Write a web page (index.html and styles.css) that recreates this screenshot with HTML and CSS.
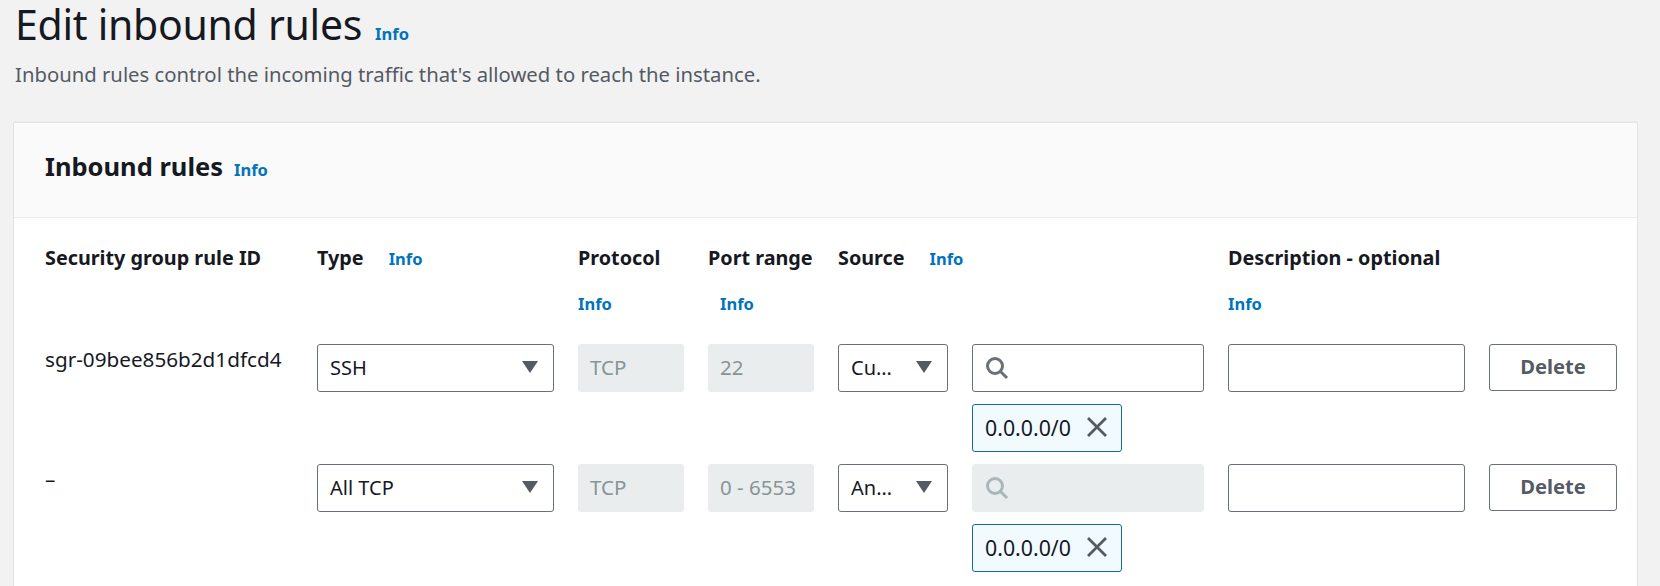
FILE: index.html
```html
<!DOCTYPE html>
<html lang="en">
<head>
<meta charset="utf-8">
<title>Edit inbound rules</title>
<link rel="stylesheet" href="styles.css">
</head>
<body>
<div class="page">
  <header class="page-head">
    <div class="title-row"><h1>Edit inbound rules</h1><a class="info info-title">Info</a></div>
    <p class="subtitle">Inbound rules control the incoming traffic that's allowed to reach the instance.</p>
  </header>
  <section class="card">
    <div class="card-head"><h2>Inbound rules</h2><a class="info info-card">Info</a></div>
    <div class="card-body">
      <div class="grid heads">
        <div class="col-head">Security group rule ID</div>
        <div class="col-head"><span>Type</span><a class="info">Info</a></div>
        <div class="col-head stack"><span>Protocol</span><a class="info">Info</a></div>
        <div class="col-head stack"><span>Port range</span><a class="info info-port">Info</a></div>
        <div class="col-head span2"><span>Source</span><a class="info">Info</a></div>
        <div class="col-head stack"><span>Description - optional</span><a class="info">Info</a></div>
        <div></div>
      </div>

      <div class="grid rule">
        <div class="rule-id">sgr-09bee856b2d1dfcd4</div>
        <div class="select"><span>SSH</span><svg class="caret" viewBox="0 0 16 12"><path d="M0 0h16L8 12z"/></svg></div>
        <div class="field">TCP</div>
        <div class="field">22</div>
        <div class="select"><span>Cu…</span><svg class="caret" viewBox="0 0 16 12"><path d="M0 0h16L8 12z"/></svg></div>
        <div class="search-cell">
          <div class="input search"><svg class="glass" viewBox="0 0 24 24"><circle cx="10" cy="10" r="7.5"/><path d="M15.500 15.500 22 22"/></svg></div>
          <div class="chip"><span>0.0.0.0/0</span><svg class="close" viewBox="0 0 20 20"><path d="M1 1l18 18M19 1 1 19"/></svg></div>
        </div>
        <div class="input"></div>
        <button class="delete">Delete</button>
      </div>

      <div class="grid rule">
        <div class="rule-id">–</div>
        <div class="select"><span>All TCP</span><svg class="caret" viewBox="0 0 16 12"><path d="M0 0h16L8 12z"/></svg></div>
        <div class="field">TCP</div>
        <div class="field">0 - 6553</div>
        <div class="select"><span>An…</span><svg class="caret" viewBox="0 0 16 12"><path d="M0 0h16L8 12z"/></svg></div>
        <div class="search-cell">
          <div class="input search disabled"><svg class="glass" viewBox="0 0 24 24"><circle cx="10" cy="10" r="7.5"/><path d="M15.500 15.500 22 22"/></svg></div>
          <div class="chip"><span>0.0.0.0/0</span><svg class="close" viewBox="0 0 20 20"><path d="M1 1l18 18M19 1 1 19"/></svg></div>
        </div>
        <div class="input"></div>
        <button class="delete">Delete</button>
      </div>
    </div>
  </section>
</div>
</body>
</html>
```

FILE: styles.css
```css
* { box-sizing: border-box; }
html, body { margin: 0; height: 100%; overflow: hidden; }
body {
  background: #f2f2f2;
  color: #16191f;
  font-family: "Noto Sans", "Open Sans", sans-serif;
}
.page { padding: 0 23px 0 14px; }
.page-head { height: 122px; padding-left: 1px; }
.title-row { display: flex; align-items: baseline; gap: 13px; height: 48px; }
h1 { margin: 0; font-size: 41px; line-height: 48px; font-weight: 400; letter-spacing: -0.28px; }
.subtitle { margin: 0; padding-top: 13px; font-size: 20.300px; line-height: 26px; color: #545b64; }
.info { color: #0073bb; font-size: 16.500px; font-weight: 700; line-height: 22px; }
.card {
  background: #fff;
  border-top: 1px solid #e4e7e7;
  height: 464px;
  box-shadow: 0 1px 1px rgba(0, 28, 36, .2), 0 0 1px rgba(0, 28, 36, .2);
}
.card-head {
  height: 95px;
  background: #fafafa;
  border-bottom: 1px solid #eaeded;
  padding: 28px 0 0 31px;
  display: flex;
  align-items: baseline;
  gap: 11px;
}
h2 { margin: 0; font-size: 25.500px; line-height: 30px; font-weight: 700; }
.card-body { padding: 23px 20px 0 31px; }
.grid {
  display: grid;
  grid-template-columns: 248px 237px 106px 106px 110px 232px 237px 128px;
  column-gap: 24px;
}
.heads { height: 103px; }
.col-head {
  display: flex;
  gap: 25px;
  align-items: baseline;
  height: 34px;
  font-size: 19.800px;
  line-height: 34px;
  font-weight: 700;
  white-space: nowrap;
}
.col-head .info { line-height: 34px; }
.stack { display: block; }
.stack .info { display: block; margin-top: 12px; }
.info-port { padding-left: 12px; }
.span2 { grid-column: span 2; }
.rule { height: 120px; align-items: start; }
.rule-id { font-size: 20.700px; line-height: 30px; white-space: nowrap; }
.select, .input, .field, .delete {
  height: 48px;
  border-radius: 3px;
  font-family: inherit;
}
.select {
  display: flex;
  align-items: center;
  justify-content: space-between;
  padding: 0 15px 2px 12px;
  background: #fff;
  border: 1px solid #687078;
  font-size: 20px;
}
.caret { width: 16px; height: 12px; fill: #545b64; flex: none; }
.field {
  background: #eaeded;
  color: #879596;
  padding: 0 12px 2px;
  display: flex;
  align-items: center;
  font-size: 20.500px;
  overflow: hidden;
  white-space: nowrap;
}
.input { background: #fff; border: 1px solid #687078; }
.search { display: flex; align-items: center; padding-left: 12px; }
.glass { width: 24px; height: 24px; fill: none; stroke: #687078; stroke-width: 3; }
.disabled { background: #eaeded; border-color: #eaeded; }
.disabled .glass { stroke: #aab7b8; }
.search-cell { display: flex; flex-direction: column; align-items: flex-start; gap: 12px; }
.search-cell .search { width: 100%; }
.chip {
  height: 48px;
  width: 150px;
  background: #f1faff;
  border: 1px solid #14689e;
  border-radius: 3px;
  display: flex;
  align-items: center;
  justify-content: space-between;
  padding: 0 14px 2px 12px;
  font-size: 21.300px;
}
.close { width: 20px; height: 20px; fill: none; stroke: #545b64; stroke-width: 2.800; }
.delete {
  height: 47px;
  background: #fff;
  border: 1px solid #687078;
  color: #545b64;
  font-size: 20.200px;
  font-weight: 700;
  padding: 0 0 3px;
}
```
